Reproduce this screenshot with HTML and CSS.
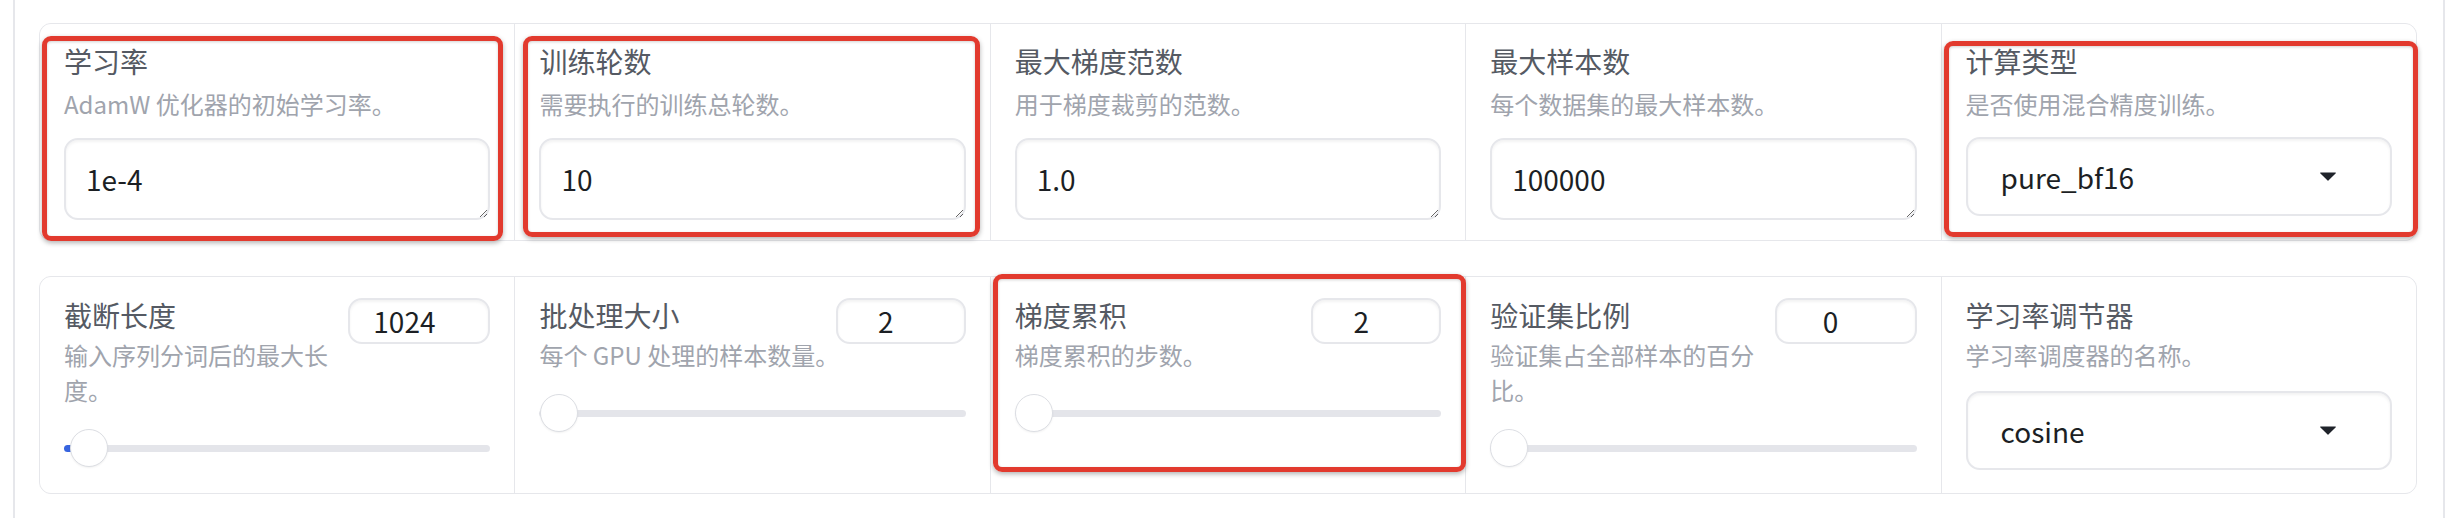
FILE: index.html
```html
<!DOCTYPE html>
<html lang="zh-CN">
<head>
<meta charset="utf-8">
<title>训练参数</title>
<link rel="stylesheet" href="styles.css">
</head>
<body>
<div class="frame">
  <div class="form-row row-top">
    <div class="block">
      <div class="label">学习率</div>
      <div class="desc">AdamW 优化器的初始学习率。</div>
      <textarea class="textbox" rows="1">1e-4</textarea>
    </div>
    <div class="block">
      <div class="label">训练轮数</div>
      <div class="desc">需要执行的训练总轮数。</div>
      <textarea class="textbox" rows="1">10</textarea>
    </div>
    <div class="block">
      <div class="label">最大梯度范数</div>
      <div class="desc">用于梯度裁剪的范数。</div>
      <textarea class="textbox" rows="1">1.0</textarea>
    </div>
    <div class="block">
      <div class="label">最大样本数</div>
      <div class="desc">每个数据集的最大样本数。</div>
      <textarea class="textbox" rows="1">100000</textarea>
    </div>
    <div class="block">
      <div class="label">计算类型</div>
      <div class="desc">是否使用混合精度训练。</div>
      <div class="dropdown">
        <span class="dropdown-value">pure_bf16</span>
        <svg class="caret" width="16" height="9" viewBox="0 0 16 9"><path d="M0.6 0.4h14.8a0.5 0.5 0 0 1 0.4 0.8L8.4 8.5a0.5 0.5 0 0 1-0.8 0L0.2 1.2a0.5 0.5 0 0 1 0.4-0.8z"/></svg>
      </div>
    </div>
  </div>

  <div class="form-row row-bottom">
    <div class="block">
      <div class="slider-head">
        <div class="head-text">
          <div class="label">截断长度</div>
          <div class="desc">输入序列分词后的最大长度。</div>
        </div>
        <input class="num" type="number" value="1024">
      </div>
      <input class="range" type="range" min="4" max="65536" step="1" value="1024" style="--fill: 6%">
    </div>
    <div class="block">
      <div class="slider-head">
        <div class="head-text">
          <div class="label">批处理大小</div>
          <div class="desc nowrap">每个 GPU 处理的样本数量。</div>
        </div>
        <input class="num num-narrow" type="number" value="2">
      </div>
      <input class="range" type="range" min="1" max="1024" step="1" value="2" style="--fill: 0%">
    </div>
    <div class="block">
      <div class="slider-head">
        <div class="head-text">
          <div class="label">梯度累积</div>
          <div class="desc">梯度累积的步数。</div>
        </div>
        <input class="num num-narrow" type="number" value="2">
      </div>
      <input class="range" type="range" min="1" max="1024" step="1" value="2" style="--fill: 0%">
    </div>
    <div class="block">
      <div class="slider-head">
        <div class="head-text">
          <div class="label">验证集比例</div>
          <div class="desc">验证集占全部样本的百分比。</div>
        </div>
        <input class="num" type="number" value="0">
      </div>
      <input class="range" type="range" min="0" max="1" step="0.001" value="0" style="--fill: 0%">
    </div>
    <div class="block">
      <div class="label">学习率调节器</div>
      <div class="desc">学习率调度器的名称。</div>
      <div class="dropdown">
        <span class="dropdown-value">cosine</span>
        <svg class="caret" width="16" height="9" viewBox="0 0 16 9"><path d="M0.6 0.4h14.8a0.5 0.5 0 0 1 0.4 0.8L8.4 8.5a0.5 0.5 0 0 1-0.8 0L0.2 1.2a0.5 0.5 0 0 1 0.4-0.8z"/></svg>
      </div>
    </div>
  </div>

  <div class="mark mark-1"></div>
  <div class="mark mark-2"></div>
  <div class="mark mark-3"></div>
  <div class="mark mark-4"></div>
</div>
</body>
</html>
```

FILE: styles.css
```css
* {
  box-sizing: border-box;
}

html, body {
  margin: 0;
  padding: 0;
  background: #ffffff;
}

body {
  font-family: "Noto Sans CJK SC", "Noto Sans", sans-serif;
  color: #1c1f24;
}

.frame {
  position: relative;
  margin-left: 13px;
  width: 2432px;
  height: 518px;
  border-left: 2px solid #e6e7eb;
  border-right: 2px solid #e6e7eb;
  padding: 23px 26px 0 24px;
  display: flex;
  flex-direction: column;
  gap: 35px;
}

.form-row {
  display: grid;
  grid-template-columns: repeat(5, 1fr);
  gap: 1px;
  background: #e6e7eb;
  border: 1px solid #e6e7eb;
  border-radius: 12px;
  overflow: hidden;
}

.block {
  background: #ffffff;
  min-width: 0;
}

.row-top .block {
  padding: 19px 24px 20px;
}

.row-bottom .block {
  padding: 20px 24px 23px;
}

.label {
  font-size: 28px;
  line-height: 36px;
  color: #555a63;
  white-space: nowrap;
}

.desc {
  font-size: 24px;
  line-height: 35px;
  color: #a0a4ad;
}

.row-top .desc {
  margin-top: 7px;
}

.row-bottom .desc {
  margin-top: 4px;
}

.nowrap {
  white-space: nowrap;
}

.textbox {
  display: block;
  width: 100%;
  height: 82px;
  margin-top: 17px;
  padding: 18px 20px;
  font-family: inherit;
  font-size: 28px;
  line-height: 42px;
  color: #1c1f24;
  background: #ffffff;
  border: 2px solid #e6e7eb;
  border-radius: 14px;
  box-shadow: inset 0 2px 3px rgba(0, 0, 0, 0.05);
  resize: vertical;
  outline: none;
  overflow: hidden;
}

.dropdown {
  display: flex;
  align-items: center;
  justify-content: space-between;
  height: 79px;
  margin-top: 16px;
  padding: 0 54px 0 33px;
  border: 2px solid #e6e7eb;
  border-radius: 14px;
  background: #ffffff;
  box-shadow: inset 0 2px 3px rgba(0, 0, 0, 0.05);
}

.row-bottom .dropdown {
  margin-top: 19px;
}

.dropdown-value {
  font-size: 28px;
  line-height: 42px;
  color: #1c1f24;
}

.caret {
  display: block;
  fill: #1f232a;
}

.slider-head {
  display: flex;
  align-items: flex-start;
}

.head-text {
  flex: 1;
  min-width: 0;
}

.num {
  flex: none;
  width: 142px;
  height: 46px;
  margin: 1px 0 0;
  padding: 0 30px 0 0;
  font-family: inherit;
  font-size: 28px;
  color: #1c1f24;
  text-align: center;
  background: #ffffff;
  border: 2px solid #e6e7eb;
  border-radius: 14px;
  box-shadow: inset 0 2px 3px rgba(0, 0, 0, 0.05);
  outline: none;
  -moz-appearance: textfield;
}

.num-narrow {
  width: 130px;
}

.num::-webkit-inner-spin-button,
.num::-webkit-outer-spin-button {
  -webkit-appearance: none;
  margin: 0;
}

.range {
  -webkit-appearance: none;
  appearance: none;
  display: block;
  width: 100%;
  height: 38px;
  margin: 22px 0 0;
  padding: 0;
  background: transparent;
  outline: none;
}

.range::-webkit-slider-runnable-track {
  height: 7px;
  border-radius: 4px;
  background: linear-gradient(to right, #3764df var(--fill), #e4e5ea var(--fill));
}

.range::-webkit-slider-thumb {
  -webkit-appearance: none;
  appearance: none;
  width: 38px;
  height: 38px;
  margin-top: -15.5px;
  border-radius: 50%;
  background: #ffffff;
  border: 1.5px solid #dcdee3;
  box-shadow: 0 1px 2px rgba(0, 0, 0, 0.06);
}

.mark {
  position: absolute;
  border: 5px solid #e23a2e;
  border-radius: 9px;
  box-shadow: 0 2px 5px rgba(0, 0, 0, 0.3), inset 0 1px 3px rgba(0, 0, 0, 0.18);
  pointer-events: none;
}

.mark-1 {
  left: 27px;
  top: 36px;
  width: 461px;
  height: 205px;
}

.mark-2 {
  left: 508px;
  top: 36px;
  width: 457px;
  height: 201px;
}

.mark-3 {
  left: 1929px;
  top: 41px;
  width: 474px;
  height: 196px;
}

.mark-4 {
  left: 978px;
  top: 274px;
  width: 473px;
  height: 198px;
}
```
